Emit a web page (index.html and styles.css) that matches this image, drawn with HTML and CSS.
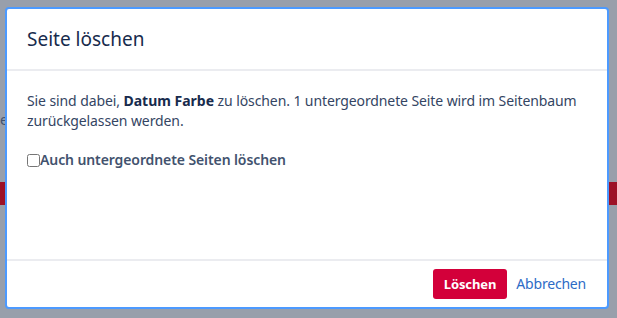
FILE: index.html
```html
<!DOCTYPE html>
<html lang="de">
<head>
<meta charset="utf-8">
<title>Seite löschen</title>
<link rel="stylesheet" href="styles.css">
</head>
<body>
<div class="page">
  <div class="page-text">e</div>
  <div class="page-bar"></div>
</div>
<div class="dialog" role="dialog">
  <header class="dialog-header">
    <h1 class="dialog-title">Seite löschen</h1>
  </header>
  <section class="dialog-body">
    <p class="dialog-msg">Sie sind dabei, <strong>Datum Farbe</strong> zu löschen. 1 untergeordnete Seite wird im Seitenbaum zurückgelassen werden.</p>
    <label class="check"><input type="checkbox" class="check-box">Auch untergeordnete Seiten löschen</label>
  </section>
  <footer class="dialog-footer">
    <button class="btn-danger">Löschen</button>
    <a class="btn-link" href="#">Abbrechen</a>
  </footer>
</div>
</body>
</html>
```
FILE: styles.css
```css
html, body {
  margin: 0;
  height: 100%;
}
body {
  background: #989fab;
  font-family: "Noto Sans", "Open Sans", sans-serif;
  color: #172b4d;
  overflow: hidden;
}
.page {
  padding-top: 112px;
}
.page-text {
  font-size: 14px;
  line-height: 16px;
  color: #42526e;
  padding-left: 0;
}
.page-bar {
  margin-top: 54px;
  height: 23px;
  background: #9d1127;
}
.dialog {
  position: absolute;
  left: 5px;
  top: 7px;
  width: 600px;
  height: 298px;
  border: 2px solid #4c9aff;
  border-radius: 4px;
  background: #fff;
  display: flex;
  flex-direction: column;
}
.dialog-header {
  height: 60px;
  padding: 0 20px;
  display: flex;
  align-items: center;
  border-bottom: 2px solid #ebecf0;
}
.dialog-title {
  margin: 0;
  font-size: 19px;
  font-weight: 400;
  color: #172b4d;
  line-height: 24px;
}
.dialog-body {
  flex: 1;
  padding: 20px 20px 0;
  font-size: 14px;
  line-height: 20px;
  letter-spacing: -0.1px;
}
.dialog-msg {
  margin: 0 0 19px;
  color: #344563;
}
.dialog-msg strong {
  color: #172b4d;
  font-weight: 700;
  letter-spacing: 0;
}
.check {
  display: flex;
  align-items: center;
  font-weight: 600;
  color: #42526e;
}
.check-box {
  margin: 0;
  width: 13px;
  height: 13px;
}
.dialog-footer {
  border-top: 2px solid #ebecf0;
  height: 46px;
  padding: 0 20px;
  display: flex;
  align-items: center;
  justify-content: flex-end;
  gap: 8px;
}
.btn-danger {
  height: 30px;
  padding: 0 11px;
  border: 0;
  border-radius: 3px;
  background: #d3003a;
  color: #fff;
  font: 700 13px "Noto Sans", sans-serif;
  letter-spacing: -0.1px;
}
.btn-link {
  padding: 0 1px;
  color: #2d6bc6;
  text-decoration: none;
  font-size: 14px;
  line-height: 30px;
  letter-spacing: -0.2px;
}
```
